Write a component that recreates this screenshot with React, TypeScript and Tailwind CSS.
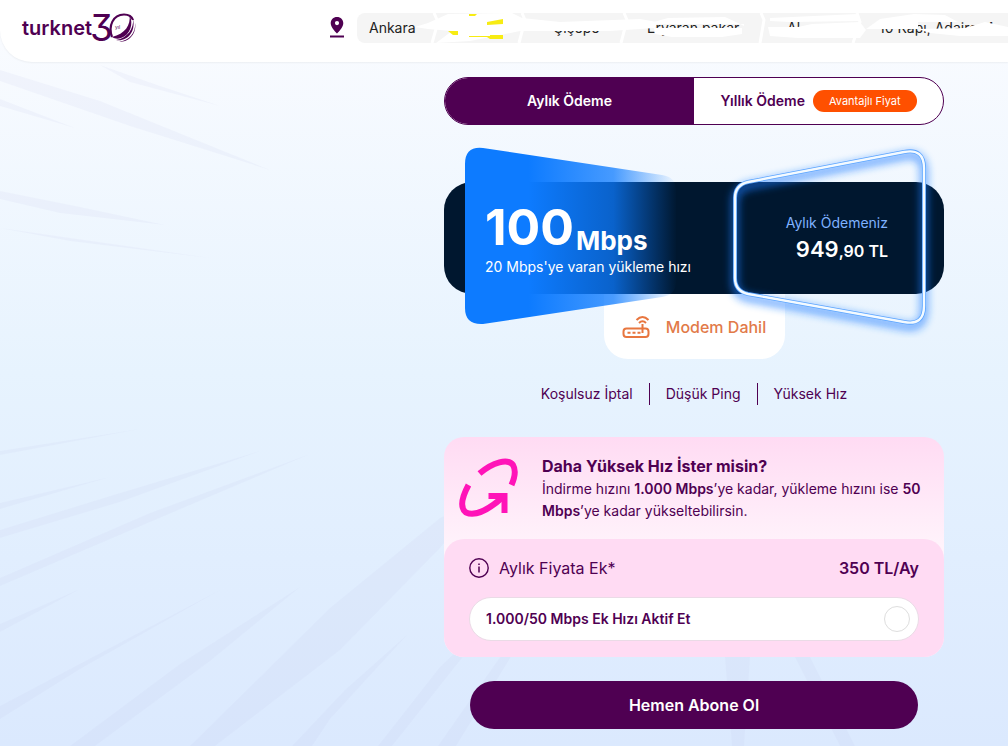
import { useState } from "react";

const crumbs = [
  { label: "Ankara", className: "w-20 rounded-l-lg pl-3" },
  { label: "", className: "w-[88px]" },
  { label: "Çiçepe", className: "w-[102px] pl-7" },
  { label: "Eryaran pakar", className: "w-[136px] pl-5" },
  { label: "Al", className: "w-24 pl-6" },
  { label: "10 Kapı, Adaire: 4", className: "w-[180px] pl-5" },
];

function Logo() {
  return (
    <svg
      className="overflow-visible"
      width="120"
      height="40"
      viewBox="20 8 120 40"
      fill="#4f0052"
      role="img"
    >
      <text x="22" y="35" fontFamily="Inter, sans-serif" fontSize="20" fontWeight="600">
        turknet
      </text>
      <text
        className="[font-feature-settings:'cv09']"
        x="90"
        y="41"
        fontFamily="Inter, sans-serif"
        fontSize="37"
      >
        3
      </text>
      <path
        d="M112 37C108 26 113 14.500 124 14.500C129 14.500 132 17 133 20"
        fill="none"
        stroke="#4f0052"
        strokeWidth="2.200"
      />
      <path d="M129.500 15C131 25 125 34 112 37C115 39 118 39 121 38C130 35 134 24 129.500 15Z" />
      <path d="M133 19C134 28 128 38 116 40C127 42 136 32 133 19Z" />
      <path d="M135 23C136 33 129 41 119 41.500C129 43 137 33 135 23Z" />
      <text x="115" y="29" fontFamily="Inter, sans-serif" fontSize="5">
        yıl
      </text>
    </svg>
  );
}

function PinIcon() {
  return (
    <svg className="shrink-0" width="16" height="22" viewBox="0 0 16 22" fill="#4f0052">
      <path
        fillRule="evenodd"
        d="M8 0C4.300 0 1.700 2.700 1.700 6.200C1.700 10.500 8 16.500 8 16.500S14.300 10.500 14.300 6.200C14.300 2.700 11.700 0 8 0ZM8 4A2.100 2.100 0 1 1 8 8.200A2.100 2.100 0 0 1 8 4Z"
      />
      <path d="M1 18.500h14v2H1z" />
    </svg>
  );
}

function Scribbles() {
  return (
    <svg
      className="pointer-events-none absolute top-0 left-0"
      width="682"
      height="30"
      viewBox="357 13 682 30"
      fill="#fff"
    >
      <g fill="none" stroke="#fff" strokeWidth="3">
        <path d="M434 13L438 22L432 43" />
        <path d="M522 13L525 20L519 43" />
        <path d="M624 13L627 20L621 43" />
        <path d="M761 13L764 20L760 43" />
        <path d="M857 13L860 22L853 43" />
      </g>
      <path d="M415 27L428 23L448 14L512 13L522 18L560 22L640 19L657 22L655 28L610 31L520 31L470 41L436 43L452 31L428 29Z" />
      <path d="M650 23L668 18L725 17L736 22L744 26V24H660Z" />
      <path d="M654 28H742V34L722 37L672 37L655 34Z" />
      <path d="M770 18L858 14L860 21L790 22L770 21Z" />
      <path d="M768 27H798L812 24L860 22L866 30L860 38L798 38L770 36Z" />
      <path d="M866 29L880 19L914 14L945 15L958 22L918 22V29Z" />
      <path d="M918 29L965 28L985 22L1008 27V36H960L930 33Z" />
      <g fill="#f7ec13">
        <path d="M469 14h8l-2 2h-6z" />
        <path d="M487 22L503 19V24L487 25Z" />
        <path d="M448 31h10v4h-5z" />
        <path d="M469 36h21v-1h13v4h-13l-3-2h-18z" />
      </g>
    </svg>
  );
}

function Header() {
  return (
    <header className="relative flex h-[62px] items-center rounded-bl-[32px] bg-white pb-1.5 pl-5 shadow-xs">
      <a href="#" className="mr-[189px] shrink-0" aria-label="turknet">
        <Logo />
      </a>
      <PinIcon />
      <nav className="relative ml-3 flex h-[30px] shrink-0 text-sm text-[#222]">
        {crumbs.map((crumb) => (
          <span
            key={crumb.label}
            className={`flex items-center bg-[#f5f5f5] whitespace-nowrap ${crumb.className}`}
          >
            {crumb.label}
          </span>
        ))}
        <Scribbles />
      </nav>
    </header>
  );
}

function Rays() {
  return (
    <svg
      className="pointer-events-none absolute inset-0"
      width="1008"
      height="746"
      viewBox="0 0 1008 746"
      fill="#c4c8ea"
      opacity="0.13"
    >
      <path d="M0 70L100 101L270 170L130 126L0 81Z" />
      <path d="M100 65L160 86L220 106L130 82Z" />
      <path d="M0 99L75 128L0 106Z" />
      <path d="M0 191L80 207L165 225L60 213L0 199Z" />
      <path d="M0 228L210 258L70 241Z" />
      <path d="M0 451L140 429L0 455Z" />
      <path d="M0 503L110 477L0 509Z" />
      <path d="M0 530L120 493L260 451L120 502L0 538Z" />
      <path d="M0 578L150 513L310 454L150 522L0 586Z" />
      <path d="M0 624L80 589L0 632Z" />
      <path d="M0 706L110 648L220 590L80 669L0 719Z" />
      <path d="M70 746L180 664L300 587L210 661L95 746Z" />
      <path d="M190 746L330 608L440 518L480 500L440 548L340 650L215 746Z" />
      <path d="M292 746L345 690L408 634L330 719L312 746Z" />
      <path d="M378 746L440 667L500 610L392 746Z" />
      <path d="M438 746L505 650H515L456 746Z" />
      <path d="M725 657h25l-6 89h-12z" />
      <path d="M795 657h15l45 89h-15z" />
    </svg>
  );
}

const FRAME =
  "M735 198Q735 185 748 182L904 152Q924 148 924 168V306Q924 326 904 322L748 294Q735 291 735 278Z";

function PlanShapes() {
  return (
    <svg
      className="pointer-events-none absolute -top-[44px] left-0"
      width="500"
      height="200"
      viewBox="444 138 500 200"
      fill="none"
    >
      <defs>
        <linearGradient id="beam" x1="465" y1="0" x2="677" y2="0" gradientUnits="userSpaceOnUse">
          <stop offset="0.300" stopColor="#0d7bff" />
          <stop offset="0.700" stopColor="#0d7bff" stopOpacity="0.750" />
          <stop offset="1" stopColor="#0d7bff" stopOpacity="0" />
        </linearGradient>
        <filter id="glow" x="-20%" y="-20%" width="140%" height="140%">
          <feGaussianBlur stdDeviation="4" />
        </filter>
      </defs>
      <path
        d="M465 164Q465 146 483 148L662 175Q676 177 676 190V282Q676 295 662 297L483 324Q465 325 465 308Z"
        fill="url(#beam)"
      />
      <path
        d={FRAME}
        transform="translate(0 4)"
        stroke="#1a7cff"
        strokeWidth="7"
        opacity="0.700"
        filter="url(#glow)"
      />
      <path d={FRAME} stroke="#5aa5ff" strokeWidth="4" />
      <path d={FRAME} stroke="#f4faff" strokeWidth="2.400" />
    </svg>
  );
}

function RouterIcon() {
  return (
    <svg width="28" height="24" viewBox="0 0 28 24" fill="none" stroke="#e8763f" strokeWidth="2">
      <rect x="1.500" y="13.500" width="25" height="8.500" rx="3" />
      <path d="M5.500 17.700h3M10.500 17.700h3M15.500 17.700h3M20.500 18V9" />
      <path d="M14.500 5Q20.500 -1 26.500 5M17 8Q20.500 4.500 24 8" />
    </svg>
  );
}

function SpeedIcon() {
  return (
    <svg width="60" height="60" viewBox="0 0 60 60" fill="none" stroke="#ff14b8" strokeWidth="6">
      <path d="M20.500 15.500C34 4 49 0 54 7C57 12 56 19 52.500 27" />
      <path d="M9.500 27C2 41 1 50 7 54.500C17 59 32 50 45 38" />
      <path d="M29.500 38H45.500V55" />
    </svg>
  );
}

function PaymentTabs({
  yearly,
  onChange,
}: {
  yearly: boolean;
  onChange: (yearly: boolean) => void;
}) {
  return (
    <div className="flex h-12 overflow-hidden rounded-full border border-[#4f0052] bg-white text-sm font-semibold">
      <button
        type="button"
        onClick={() => onChange(false)}
        className={`flex-1 ${yearly ? "text-[#4f0052]" : "bg-[#4f0052] text-white"}`}
      >
        Aylık Ödeme
      </button>
      <button
        type="button"
        onClick={() => onChange(true)}
        className={`flex flex-1 items-center justify-center gap-2 ${
          yearly ? "bg-[#4f0052] text-white" : "text-[#4f0052]"
        }`}
      >
        Yıllık Ödeme
        <span className="rounded-full bg-[#ff5000] px-4 text-[11px] leading-[22px] font-normal text-white">
          Avantajlı Fiyat
        </span>
      </button>
    </div>
  );
}

function PlanCard() {
  return (
    <div className="relative mt-[57px]">
      <div className="h-28 rounded-[28px] bg-[#00172f]" />
      <div className="mx-auto flex h-[65px] w-[181px] items-center justify-center gap-4 rounded-b-3xl bg-white font-medium text-[#e27a49]">
        <RouterIcon />
        Modem Dahil
      </div>
      <PlanShapes />
      <div className="absolute inset-x-0 top-0 flex h-28 items-center justify-between pt-0.5 pr-14 pl-[41px] text-white">
        <div>
          <p className="flex items-end gap-0.5 font-bold">
            <span className="text-[50px] leading-[52px]">100</span>
            <span className="text-[26px] leading-6">Mbps</span>
          </p>
          <p className="mt-1 text-sm">20 Mbps'ye varan yükleme hızı</p>
        </div>
        <div className="text-right">
          <p className="text-sm text-[#7fb2ff]">Aylık Ödemeniz</p>
          <p className="font-semibold">
            <span className="text-[22px]">949</span>,90 TL
          </p>
        </div>
      </div>
    </div>
  );
}

function SpeedBoost() {
  const [active, setActive] = useState(false);

  return (
    <section className="mt-8 rounded-[20px] bg-linear-to-b from-[#ffdbf3] to-[#fff3fb] to-50%">
      <div className="flex h-[102px] gap-[23px] pt-[17px] pr-5 pl-[15px]">
        <div className="shrink-0 pt-1">
          <SpeedIcon />
        </div>
        <div className="text-sm leading-[22px]">
          <h2 className="text-base leading-6 font-bold">Daha Yüksek Hız İster misin?</h2>
          <p>
            İndirme hızını <b className="font-semibold">1.000 Mbps</b>’ye kadar, yükleme hızını ise{" "}
            <b className="font-semibold">50 Mbps</b>’ye kadar yükseltebilirsin.
          </p>
        </div>
      </div>
      <div className="rounded-[20px] bg-[#ffdbf3] px-[25px] pt-[17px] pb-4">
        <div className="flex items-center gap-2.5">
          <svg width="20" height="20" viewBox="0 0 20 20" fill="none" stroke="#4f0052">
            <circle cx="10" cy="10" r="9.200" strokeWidth="1.400" />
            <path d="M10 8.500V14.500M10 5.500V7" strokeWidth="1.500" />
          </svg>
          <span>Aylık Fiyata Ek*</span>
          <span className="ml-auto font-semibold">350 TL/Ay</span>
        </div>
        <label className="mt-[17px] flex h-11 items-center justify-between rounded-full border border-[#eadbe6] bg-white pr-2 pl-4 text-sm font-semibold">
          1.000/50 Mbps Ek Hızı Aktif Et
          <input
            type="checkbox"
            checked={active}
            onChange={(e) => setActive(e.target.checked)}
            className="size-[26px] appearance-none rounded-full border border-[#dedede] bg-white checked:bg-[#4f0052]"
          />
        </label>
      </div>
    </section>
  );
}

export default function App() {
  const [yearly, setYearly] = useState(false);

  return (
    <div className="relative min-h-screen overflow-hidden bg-linear-to-b from-[#fbfcff] via-[#e7f3fe] to-[#dbe9fe] font-['Inter',sans-serif] text-[#4f0052]">
      <Rays />
      <Header />
      <main className="relative flex justify-end px-16 pt-[15px] pb-4">
        <div className="w-full max-w-[500px]">
          <PaymentTabs yearly={yearly} onChange={setYearly} />
          <PlanCard />
          <ul className="mt-6 flex justify-center divide-x divide-[#4f0052] text-sm leading-[22px]">
            <li className="px-4">Koşulsuz İptal</li>
            <li className="px-4">Düşük Ping</li>
            <li className="px-4">Yüksek Hız</li>
          </ul>
          <SpeedBoost />
          <div className="mt-6 px-[26px]">
            <button
              type="button"
              className="h-12 w-full rounded-full bg-[#4f0052] font-semibold text-white"
            >
              Hemen Abone Ol
            </button>
          </div>
        </div>
      </main>
    </div>
  );
}
